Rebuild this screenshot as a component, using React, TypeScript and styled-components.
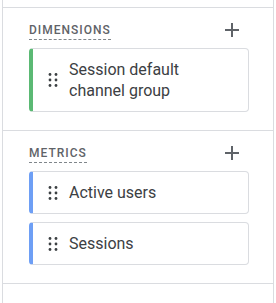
import React, { FC } from 'react';
import styled, { createGlobalStyle } from 'styled-components';

const GlobalStyle = createGlobalStyle`
  html, body {
    margin: 0;
    padding: 0;
    background: #ffffff;
  }
  body {
    font-family: Roboto, "Liberation Sans", Arial, sans-serif;
  }
`;

const Panel = styled.div`
  margin-left: 2px;
  width: 270px;
  height: 303px;
  border-left: 1px solid #dadce0;
  border-right: 1px solid #dadce0;
  box-sizing: content-box;
`;

const TopGap = styled.div`
  height: 7px;
  border-bottom: 1px solid #dadce0;
`;

const Section = styled.section`
  padding: 10px 24px 18px 26px;
  border-bottom: 1px solid #dadce0;
`;

const Header = styled.div`
  display: flex;
  align-items: center;
  justify-content: space-between;
  height: 24px;
  margin-bottom: 6px;
`;

const Title = styled.span`
  font-size: 12px;
  font-weight: 500;
  letter-spacing: 1px;
  line-height: 14px;
  color: #5f6368;
  text-transform: uppercase;
  padding: 2px 0;
  border-bottom: 1px dashed #80868b;
`;

const AddButton = styled.button.attrs({ type: 'button' })`
  border: none;
  background: none;
  padding: 0;
  margin-right: 5px;
  width: 24px;
  height: 24px;
  display: flex;
  align-items: center;
  justify-content: center;
  cursor: pointer;
  color: #5f6368;
`;

const List = styled.div`
  display: flex;
  flex-direction: column;
  gap: 8px;
`;

const Chip = styled.div<{ accent: string }>`
  display: flex;
  align-items: center;
  gap: 11px;
  padding: 10px 12px 10px 15px;
  border: 1px solid #dadce0;
  border-left: 4px solid ${({ accent }) => accent};
  border-radius: 4px;
  background: #ffffff;
`;

const Handle = styled.svg`
  flex: none;
  width: 10px;
  height: 14px;
  color: #3c4043;
`;

const Label = styled.span`
  font-size: 16px;
  line-height: 21px;
  color: #3c4043;
`;

const PlusIcon: FC = () => (
  <svg width="24" height="24" viewBox="0 0 24 24" fill="currentColor">
    <path d="M19 13h-6v6h-2v-6H5v-2h6V5h2v6h6v2z" />
  </svg>
);

const DragHandle: FC = () => (
  <Handle viewBox="0 0 10 14" fill="currentColor">
    {[1.5, 7, 12.5].map((cy) => (
      <React.Fragment key={cy}>
        <circle cx="2" cy={cy} r="1.4" />
        <circle cx="8" cy={cy} r="1.4" />
      </React.Fragment>
    ))}
  </Handle>
);

interface IGroup {
  title: string;
  accent: string;
  items: string[];
}

const groups: IGroup[] = [
  { title: 'Dimensions', accent: '#5bb974', items: ['Session default channel group'] },
  { title: 'Metrics', accent: '#6e9ff5', items: ['Active users', 'Sessions'] },
];

const App: FC = () => (
  <>
    <GlobalStyle />
    <Panel>
      <TopGap />
      {groups.map((group) => (
        <Section key={group.title}>
          <Header>
            <Title>{group.title}</Title>
            <AddButton aria-label={`Add ${group.title}`}>
              <PlusIcon />
            </AddButton>
          </Header>
          <List>
            {group.items.map((item) => (
              <Chip key={item} accent={group.accent}>
                <DragHandle />
                <Label>{item}</Label>
              </Chip>
            ))}
          </List>
        </Section>
      ))}
    </Panel>
  </>
);

export default App;
